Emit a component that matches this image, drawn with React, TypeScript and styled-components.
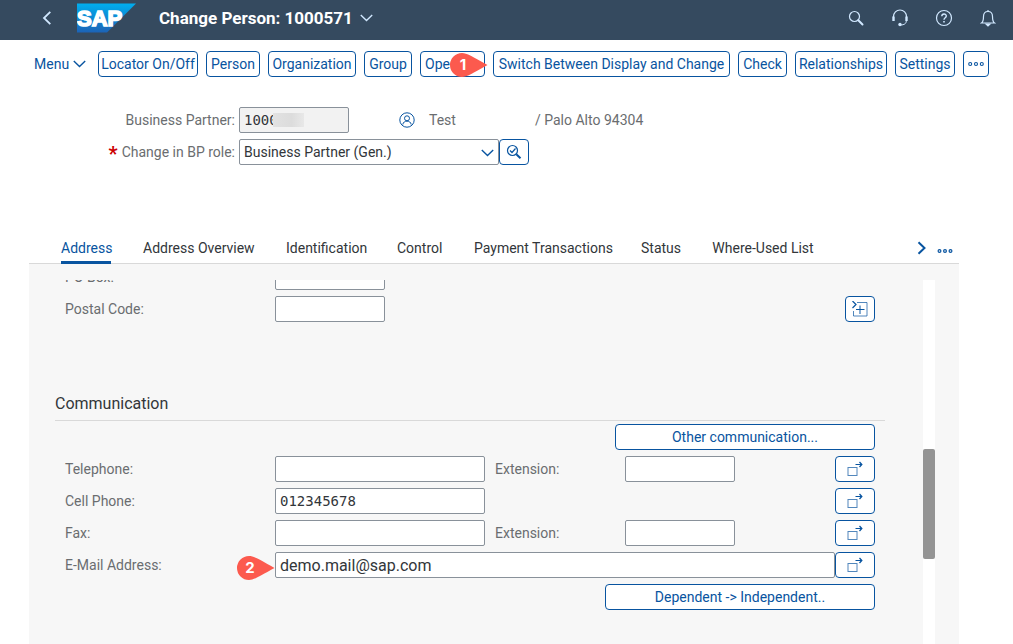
import React from "react";
import styled, { createGlobalStyle } from "styled-components";

const BLUE = "#0854a0";
const ICON_LIGHT = "#d1e8ff";

const Global = createGlobalStyle`
  * { box-sizing: border-box; }
  body { margin: 0; background: #fff; }
  body, button, input, select { font-family: Roboto, "Noto Sans", sans-serif; font-size: 14px; }
`;

const Page = styled.div`
  height: 100vh;
  display: flex;
  flex-direction: column;
  overflow: hidden;
  color: #32363a;
`;

const Shell = styled.header`
  flex: none;
  height: 40px;
  background: #354a5f;
  display: flex;
  align-items: center;
  padding: 0 12px 4px 37px;
`;

const ShellButton = styled.button`
  border: 0;
  background: none;
  padding: 0;
  width: 20px;
  height: 20px;
  display: flex;
  align-items: center;
  justify-content: center;
`;

const Logo = styled.a`
  display: block;
  height: 30px;
  margin: 0 23px 0 20px;
`;

const ShellTitle = styled.h1`
  margin: 0 4px 0 0;
  font-size: 17px;
  line-height: 20px;
  font-weight: 700;
  color: #fff;
`;

const ShellActions = styled.div`
  margin-left: auto;
  display: flex;
  gap: 24px;
  padding-right: 3px;
`;

const Toolbar = styled.nav`
  flex: none;
  display: flex;
  gap: 8px;
  padding: 11px 24px 0 34px;
`;

const MenuButton = styled.button`
  border: 0;
  background: none;
  color: ${BLUE};
  padding: 0;
  width: 56px;
  height: 26px;
  line-height: 24px;
  display: flex;
  align-items: center;
  gap: 4px;
`;

const Button = styled.button<{ $w?: number; $start?: boolean }>`
  position: relative;
  flex: none;
  height: 26px;
  padding: 0 ${(p) => (p.$start ? 4 : 0)}px;
  width: ${(p) => (p.$w ? `${p.$w}px` : "auto")};
  border: 1px solid ${BLUE};
  border-radius: 4px;
  background: #fff;
  color: ${BLUE};
  line-height: 24px;
  white-space: nowrap;
  display: flex;
  align-items: center;
  justify-content: ${(p) => (p.$start ? "flex-start" : "center")};
`;

const Callout = styled.span<{ $left: number; $top: number }>`
  position: absolute;
  left: ${(p) => p.$left}px;
  top: ${(p) => p.$top}px;
  width: 38px;
  height: 24px;
  svg { display: block; }
  b {
    position: absolute;
    left: 0;
    top: 0;
    width: 26px;
    line-height: 24px;
    text-align: center;
    color: #fff;
    font-family: Inter, sans-serif;
    font-size: 15px;
  }
`;

const Header = styled.section`
  flex: none;
  padding: 30px 54px 0 29px;
  display: flex;
  flex-direction: column;
  gap: 6px;
`;

const HeaderRow = styled.div`
  display: flex;
  align-items: center;
  height: 26px;
`;

const HeaderLabel = styled.label`
  width: 206px;
  margin-right: 4px;
  text-align: right;
  color: #6a6d70;
  white-space: nowrap;
`;

const Required = styled.span`
  color: #c00;
  font-weight: 700;
  font-size: 20px;
  line-height: 14px;
  vertical-align: -4px;
  margin-right: 4px;
`;

const Input = styled.input<{ $w?: number; $size?: number; $mono?: boolean }>`
  height: 26px;
  padding: 0 4px;
  ${(p) => (p.$w ? `width: ${p.$w}px; flex: none;` : "flex: 1; min-width: 0;")}
  border: 1px solid #89919a;
  border-radius: 2px;
  background: #fff;
  color: #32363a;
  font-size: ${(p) => p.$size ?? 14}px;
  font-family: ${(p) => (p.$mono ? '"DejaVu Sans Mono", monospace' : 'Roboto, sans-serif')};
  &:read-only { background: #f2f2f2; }
`;

const Masked = styled.div`
  position: relative;
  display: flex;
  &::after {
    content: "";
    position: absolute;
    left: 34px;
    top: 6px;
    width: 31px;
    height: 14px;
    background: linear-gradient(90deg, #e2e2e2, #dcdcdc 60%, #e8e8e8);
  }
`;

const Muted = styled.span<{ $w?: number }>`
  color: #6a6d70;
  width: ${(p) => (p.$w ? `${p.$w}px` : "auto")};
`;

const PersonIcon = styled.svg`
  margin: 0 14px 0 50px;
`;

const SelectBox = styled.div`
  position: relative;
  width: 260px;
  select {
    appearance: none;
    width: 100%;
    height: 26px;
    padding: 0 28px 0 4px;
    border: 1px solid #89919a;
    border-radius: 2px;
    background: #fff;
    color: #32363a;
  }
  svg { position: absolute; right: 5px; top: 10px; pointer-events: none; }
`;

const Tabs = styled.div`
  flex: none;
  display: flex;
  align-items: stretch;
  height: 32px;
  margin: 67px 54px 0 29px;
  padding: 0 4px 0 32px;
  border-bottom: 1px solid #d9d9d9;
`;

const Tab = styled.button<{ $active?: boolean; $w: number }>`
  flex: none;
  width: ${(p) => p.$w}px;
  margin-right: 32px;
  padding: 2px 0 0;
  border: 0;
  border-bottom: 3px solid ${(p) => (p.$active ? BLUE : "transparent")};
  background: none;
  color: ${(p) => (p.$active ? BLUE : "#32363a")};
  line-height: 24px;
  text-align: center;
  white-space: nowrap;
  margin-bottom: -1px;
`;

const TabTools = styled.div`
  margin-left: auto;
  display: flex;
  align-items: center;
  gap: 3px;
`;

const Panel = styled.main`
  flex: 1;
  min-height: 0;
  display: flex;
  margin: 0 54px 0 29px;
  padding: 16px 24px 0 0;
  background: #f7f7f7;
`;

const Scroller = styled.div`
  flex: 1;
  min-width: 0;
  overflow: hidden;
  padding: 0 38px 0 26px;
`;

const Track = styled.div`
  flex: none;
  width: 12px;
  background: #fff;
  padding-top: 169px;
`;

const Thumb = styled.div`
  height: 110px;
  border-radius: 2px;
  background: #949494;
`;

const Group = styled.div<{ $top?: number }>`
  display: flex;
  flex-direction: column;
  gap: 6px;
  padding: 0 10px;
  margin-top: ${(p) => p.$top ?? 0}px;
`;

const Row = styled.div<{ $end?: boolean }>`
  position: relative;
  display: flex;
  align-items: center;
  height: 26px;
  justify-content: ${(p) => (p.$end ? "flex-end" : "flex-start")};
`;

const Label = styled.label<{ $w: number }>`
  flex: none;
  width: ${(p) => p.$w}px;
  color: #6a6d70;
`;

const Gap = styled.span`
  flex: none;
  width: 10px;
`;

const Spacer = styled.span`
  flex: 1;
`;

const SectionTitle = styled.h2`
  margin: 65px 0 0;
  padding-top: 5px;
  height: 34px;
  border-bottom: 1px solid #d9d9d9;
  font-size: 16px;
  line-height: 24px;
  font-weight: 400;
`;

const Chevron = ({ color }: { color: string }) => (
  <svg width="13" height="8" viewBox="0 0 13 8" fill="none" stroke={color} strokeWidth="1.4">
    <path d="M.8 1l5.7 5.6L12.2 1" />
  </svg>
);

const Dots = () => (
  <svg width="16" height="6" viewBox="0 0 16 6" fill="none" stroke={BLUE} strokeWidth="1.1">
    <circle cx="2.2" cy="3" r="1.5" />
    <circle cx="8" cy="3" r="1.5" />
    <circle cx="13.8" cy="3" r="1.5" />
  </svg>
);

const OpenIcon = () => (
  <svg width="16" height="16" viewBox="0 0 16 16" fill="none" stroke={BLUE}>
    <rect x="1" y="6.5" width="9" height="8" strokeOpacity=".7" />
    <path d="M8.500 3.500H15" />
    <path d="M12.500 1L14.800 3.500L12.500 6" strokeWidth="1.3" />
  </svg>
);

const Marker = ({ n, left, top }: { n: number; left: number; top: number }) => (
  <Callout $left={left} $top={top}>
    <svg width="38" height="24" viewBox="0 0 38 24">
      <path d="M12 0C17 0 22 3.500 37.500 12C22 20.500 17 24 12 24A12 12 0 0 1 12 0Z" fill="#fc5a4e" />
    </svg>
    <b>{n}</b>
  </Callout>
);

const actions = [
  { text: "Locator On/Off", w: 100 },
  { text: "Person", w: 54 },
  { text: "Organization", w: 88 },
  { text: "Group", w: 48 },
  { text: "Open", w: 65, marker: true },
  { text: "Switch Between Display and Change", w: 237 },
  { text: "Check", w: 49 },
  { text: "Relationships", w: 92 },
  { text: "Settings", w: 60 },
];

const tabs = [
  { text: "Address", w: 50 },
  { text: "Address Overview", w: 111 },
  { text: "Identification", w: 79 },
  { text: "Control", w: 45 },
  { text: "Payment Transactions", w: 135 },
  { text: "Status", w: 39 },
  { text: "Where-Used List", w: 102 },
];

export default function App() {
  return (
    <>
      <Global />
      <Page>
        <Shell>
          <ShellButton aria-label="Back">
            <svg width="10" height="14" viewBox="0 0 10 14" fill="none" stroke={ICON_LIGHT} strokeWidth="1.8">
              <path d="M8.300 .8L2 7l6.300 6.200" />
            </svg>
          </ShellButton>
          <Logo href="#" aria-label="SAP">
            <svg width="59" height="30" viewBox="0 0 59 30">
              <defs>
                <linearGradient id="sap" x1="0" y1="0" x2="0" y2="1">
                  <stop offset="0" stopColor="#00aeef" />
                  <stop offset="1" stopColor="#1c63b7" />
                </linearGradient>
              </defs>
              <path d="M0 0.500H59L30 29.500H0Z" fill="url(#sap)" />
              <text x="0" y="23" fill="#fff" fontFamily="Liberation Sans, sans-serif" fontWeight="700" fontSize="22" stroke="#fff" strokeWidth="1.6">SAP</text>
            </svg>
          </Logo>
          <ShellTitle>Change Person: 1000571</ShellTitle>
          <ShellButton aria-label="Open navigation menu">
            <Chevron color={ICON_LIGHT} />
          </ShellButton>
          <ShellActions>
            <ShellButton aria-label="Search">
              <svg width="16" height="16" viewBox="0 0 16 16" fill="none" stroke={ICON_LIGHT}>
                <circle cx="6.500" cy="6.500" r="5" strokeWidth="1.2" />
                <path d="M10.300 10.300L14.500 14.500" strokeWidth="2" strokeLinecap="round" />
              </svg>
            </ShellButton>
            <ShellButton aria-label="Support">
              <svg width="18" height="18" viewBox="0 0 18 18" fill="none" stroke={ICON_LIGHT}>
                <path d="M2.500 8V7.500a6.500 6.500 0 0 1 13 0V8" strokeWidth="1.2" />
                <path d="M2.500 7.500v4.500M15.500 7.500v4.500" strokeWidth="2.400" />
                <path d="M15.300 12c0 2.500-2 4-6 4" />
                <circle cx="9" cy="15.500" r="1.700" fill={ICON_LIGHT} stroke="none" />
              </svg>
            </ShellButton>
            <ShellButton aria-label="Help">
              <svg width="18" height="18" viewBox="0 0 18 18" fill="none" stroke={ICON_LIGHT} strokeWidth="1.2">
                <circle cx="9" cy="9" r="7.500" />
                <path d="M6.800 7.300c0-3 4.500-3 4.500-.3 0 1.800-2.300 1.700-2.300 3.700" strokeWidth="1.4" />
                <path d="M9 12v1.500" strokeWidth="1.6" />
              </svg>
            </ShellButton>
            <ShellButton aria-label="Notifications">
              <svg width="16" height="18" viewBox="0 0 16 18" fill="none" stroke={ICON_LIGHT} strokeWidth="1.2">
                <path d="M1.500 14C3.500 12.500 3.500 10.500 3.500 7.500c0-3 1.500-5 4.500-5s4.500 2 4.500 5c0 3 0 5 2 6.500Z" />
                <path d="M8 1v1.500" />
                <path d="M6 15h4l-2 2z" fill={ICON_LIGHT} />
              </svg>
            </ShellButton>
          </ShellActions>
        </Shell>

        <Toolbar>
          <MenuButton>
            Menu <Chevron color={BLUE} />
          </MenuButton>
          {actions.map((a) => (
            <Button key={a.text} $w={a.w} $start={a.marker}>
              {a.text}
              {a.marker && <Marker n={1} left={29} top={1} />}
            </Button>
          ))}
          <Button $w={26} aria-label="More">
            <Dots />
          </Button>
        </Toolbar>

        <Header>
          <HeaderRow>
            <HeaderLabel htmlFor="bp">Business Partner:</HeaderLabel>
            <Masked>
              <Input id="bp" $w={110} $mono readOnly defaultValue="1000" />
            </Masked>
            <PersonIcon width="16" height="16" viewBox="0 0 16 16" fill="none" stroke={BLUE}>
              <circle cx="8" cy="8" r="7.200" />
              <circle cx="8" cy="6.300" r="2.500" />
              <path d="M3.800 12.500c.5-4.500 7.900-4.500 8.400 0" />
            </PersonIcon>
            <Muted $w={106}>Test</Muted>
            <Muted>/ Palo Alto 94304</Muted>
          </HeaderRow>
          <HeaderRow>
            <HeaderLabel htmlFor="role">
              <Required>*</Required>Change in BP role:
            </HeaderLabel>
            <SelectBox>
              <select id="role">
                <option>Business Partner (Gen.)</option>
              </select>
              <Chevron color={BLUE} />
            </SelectBox>
            <Button $w={30} aria-label="Role details">
              <svg width="16" height="16" viewBox="0 0 16 16" fill="none" stroke={BLUE}>
                <circle cx="6.500" cy="6.500" r="5" strokeWidth="1.2" />
                <path d="M4 6.500l2 2 3.500-4" strokeWidth="1.2" />
                <path d="M10.300 10.300L14.500 14.200" strokeWidth="2" />
              </svg>
            </Button>
          </HeaderRow>
        </Header>

        <Tabs role="tablist">
          {tabs.map((t, i) => (
            <Tab key={t.text} role="tab" aria-selected={i === 0} $active={i === 0} $w={t.w}>
              {t.text}
            </Tab>
          ))}
          <TabTools>
            <ShellButton aria-label="Next tabs">
              <svg width="10" height="14" viewBox="0 0 10 14" fill="none" stroke={BLUE} strokeWidth="2">
                <path d="M1.500 1.200L7.500 7l-6 5.800" />
              </svg>
            </ShellButton>
            <ShellButton aria-label="All tabs">
              <svg width="16" height="12" viewBox="0 0 16 12" fill="none" stroke={BLUE} strokeWidth="1.2">
                <circle cx="2.500" cy="9" r="1.400" />
                <circle cx="8" cy="9" r="1.400" />
                <circle cx="13.500" cy="9" r="1.400" />
              </svg>
            </ShellButton>
          </TabTools>
        </Tabs>

        <Panel>
          <Scroller>
            <Group $top={-16}>
              <Row>
                <Label $w={210} htmlFor="pobox">PO Box:</Label>
                <Input id="pobox" $w={110} />
              </Row>
              <Row>
                <Label $w={210} htmlFor="postal">Postal Code:</Label>
                <Input id="postal" $w={110} />
                <Spacer />
                <Button $w={30} aria-label="Expand address">
                  <svg width="16" height="16" viewBox="0 0 16 16" fill="none" stroke={BLUE}>
                    <path d="M5 1.500H15V15H1.500V10" strokeOpacity=".7" />
                    <path d="M8 4.500V13M4 8.500H12.500" />
                    <path d="M.5 0L4 3.500L.5 7" strokeWidth="1.2" />
                  </svg>
                </Button>
              </Row>
            </Group>

            <SectionTitle>Communication</SectionTitle>

            <Group $top={3}>
              <Row $end>
                <Button $w={260}>Other communication...</Button>
              </Row>
              <Row>
                <Label $w={210} htmlFor="tel">Telephone:</Label>
                <Input id="tel" $w={210} />
                <Gap />
                <Label $w={130} htmlFor="telext">Extension:</Label>
                <Input id="telext" $w={110} />
                <Spacer />
                <Button $w={40} aria-label="More telephone numbers"><OpenIcon /></Button>
              </Row>
              <Row>
                <Label $w={210} htmlFor="cell">Cell Phone:</Label>
                <Input id="cell" $w={210} $mono defaultValue="012345678" />
                <Spacer />
                <Button $w={40} aria-label="More cell phones"><OpenIcon /></Button>
              </Row>
              <Row>
                <Label $w={210} htmlFor="fax">Fax:</Label>
                <Input id="fax" $w={210} />
                <Gap />
                <Label $w={130} htmlFor="faxext">Extension:</Label>
                <Input id="faxext" $w={110} />
                <Spacer />
                <Button $w={40} aria-label="More fax numbers"><OpenIcon /></Button>
              </Row>
              <Row>
                <Label $w={210} htmlFor="mail">E-Mail Address:</Label>
                <Input id="mail" $size={16} defaultValue="demo.mail@sap.com" />
                <Button $w={40} aria-label="More e-mail addresses"><OpenIcon /></Button>
                <Marker n={2} left={172} top={4} />
              </Row>
              <Row $end>
                <Button $w={270}>{"Dependent -> Independent.."}</Button>
              </Row>
            </Group>
          </Scroller>
          <Track>
            <Thumb />
          </Track>
        </Panel>
      </Page>
    </>
  );
}
